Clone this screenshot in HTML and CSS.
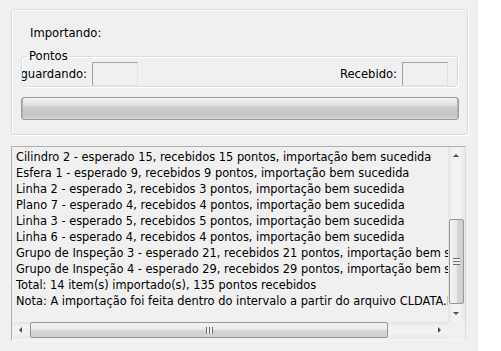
FILE: index.html
```
<!DOCTYPE html>
<html lang="pt">
<head>
  <meta charset="UTF-8">
  <title>Importando</title>
  <link rel="stylesheet" href="styles.css">
</head>
<body>
  <div class="dialog">
    <div class="group-box">
      <div class="status-label">Importando:</div>

      <fieldset class="points-box">
        <legend>Pontos</legend>
        <div class="points-row">
          <div class="field">
            <div class="field-label clip">Aguardando:</div>
            <div class="field-input"></div>
          </div>
          <div class="field">
            <div class="field-label">Recebido:</div>
            <div class="field-input"></div>
          </div>
        </div>
      </fieldset>

      <div class="progress-bar"></div>
    </div>

    <div class="log-box">
      <div class="log-view">
        <div class="log-lines" id="logLines"></div>
        <div class="v-scroll">
          <div class="arrow up"></div>
          <div class="v-track">
            <div class="v-thumb"><span class="grip-v"></span></div>
          </div>
          <div class="arrow down"></div>
        </div>
      </div>
      <div class="h-row">
        <div class="h-scroll">
          <div class="arrow left"></div>
          <div class="h-track">
            <div class="h-thumb"><span class="grip-h"></span></div>
          </div>
          <div class="arrow right"></div>
        </div>
        <div class="corner"></div>
      </div>
    </div>
  </div>

  <script>
const lines = [
  "Cilindro 2 - esperado 15, recebidos 15 pontos, importação bem sucedida",
  "Esfera 1 - esperado 9, recebidos 9 pontos, importação bem sucedida",
  "Linha 2 - esperado 3, recebidos 3 pontos, importação bem sucedida",
  "Plano 7 - esperado 4, recebidos 4 pontos, importação bem sucedida",
  "Linha 3 - esperado 5, recebidos 5 pontos, importação bem sucedida",
  "Linha 6 - esperado 4, recebidos 4 pontos, importação bem sucedida",
  "Grupo de Inspeção 3 - esperado 21, recebidos 21 pontos, importação bem sucedida",
  "Grupo de Inspeção 4 - esperado 29, recebidos 29 pontos, importação bem sucedida",
  "Total: 14 item(s) importado(s), 135 pontos recebidos",
  "Nota: A importação foi feita dentro do intervalo a partir do arquivo CLDATA.DAT"
];

const logLines = document.getElementById("logLines");
lines.forEach(text => {
  const row = document.createElement("div");
  row.className = "log-line";
  row.textContent = text;
  logLines.appendChild(row);
});
  </script>
</body>
</html>
```

FILE: styles.css
```
body {
  margin: 0;
  background: #ffffff;
  font-family: "DejaVu Sans", Verdana, sans-serif;
  font-size: 11.6px;
  color: #000;
}

.dialog {
  width: 478px;
  height: 351px;
  background: #f0f0f0;
  padding: 9px 0 0 11px;
  box-sizing: border-box;
}

/* top group box */
.group-box {
  width: 457px;
  height: 126px;
  box-sizing: border-box;
  border: 1px solid #d5dfe5;
  border-radius: 3px;
  box-shadow: inset 1px 1px 0 #fff, 1px 1px 0 #fff;
  padding: 16px 9px 0 9px;
}

.status-label {
  padding-left: 9px;
  height: 14px;
  line-height: 14px;
}

.points-box {
  margin: 10px 0 0 0;
  padding: 0;
  width: 437px;
  height: 37px;
  box-sizing: border-box;
  border: 1px solid #d5dfe5;
  border-radius: 3px;
  box-shadow: inset 1px 1px 0 #fff, 1px 1px 0 #fff;
}

.points-box legend {
  margin-left: 5px;
  padding: 0 2px;
  line-height: 13px;
}

.points-row {
  display: flex;
  justify-content: space-between;
  padding-right: 9px;
  margin-top: -1px;
}

.field {
  display: flex;
  align-items: center;
  gap: 5px;
}

.field-label {
  white-space: nowrap;
}

.field-label.clip {
  width: 65px;
  overflow: hidden;
  display: flex;
  justify-content: flex-end;
}

.field-input {
  width: 46px;
  height: 24px;
  box-sizing: border-box;
  border: 1px solid #a0a0a0;
  border-right-color: #e3e3e3;
  border-bottom-color: #e3e3e3;
  background: #f0f0f0;
}

.progress-bar {
  margin-top: 10px;
  height: 23px;
  width: 438px;
  box-sizing: border-box;
  border: 1px solid #9c9c9c;
  border-radius: 3px;
  background: linear-gradient(#f2f2f2 0%, #e4e4e4 30%, #cbcbcb 45%, #c6c6c6 85%, #d6d6d6 100%);
  box-shadow: inset 1px 0 0 #b4b4b4, inset -1px 0 0 #b4b4b4;
}

/* log list */
.log-box {
  margin-top: 11px;
  width: 455px;
  height: 195px;
  box-sizing: border-box;
  border: 1px solid #b0b0b0;
  border-right-color: #dcdcdc;
  border-bottom-color: #f8f8f8;
  padding-bottom: 2px;
  display: flex;
  flex-direction: column;
}

.log-view {
  display: flex;
  height: 175px;
}

.log-lines {
  flex: 1;
  overflow: hidden;
  padding: 2px 0 0 4px;
}

.log-line {
  height: 16px;
  line-height: 16px;
  white-space: nowrap;
  font-size: 11.4px;
}

.v-scroll {
  width: 17px;
  display: flex;
  flex-direction: column;
  background: linear-gradient(90deg, #e4e4e4, #f2f2f2 30%, #f2f2f2 70%, #e8e8e8);
}

.v-track {
  flex: 1;
  position: relative;
}

.v-thumb {
  position: absolute;
  top: 55px;
  left: 1px;
  width: 15px;
  height: 85px;
  box-sizing: border-box;
  border: 1px solid #979797;
  border-radius: 2px;
  background: linear-gradient(90deg, #f4f4f4, #e9e9e9 50%, #d6d6d6 51%, #cfcfcf);
  display: flex;
  align-items: center;
  justify-content: center;
}

.grip-v {
  width: 7px;
  height: 7px;
  background: repeating-linear-gradient(#6b6b6b 0 1px, #f0f0f0 1px 3px);
}

.h-row {
  display: flex;
  height: 16px;
}

.h-scroll {
  flex: 1;
  display: flex;
  background: linear-gradient(#e4e4e4, #f2f2f2 30%, #f2f2f2 70%, #e8e8e8);
}

.h-track {
  flex: 1;
  position: relative;
}

.h-thumb {
  position: absolute;
  left: 1px;
  top: 0;
  width: 358px;
  height: 16px;
  box-sizing: border-box;
  border: 1px solid #979797;
  border-radius: 2px;
  background: linear-gradient(#f4f4f4, #e9e9e9 50%, #d6d6d6 51%, #cfcfcf);
  display: flex;
  align-items: center;
  justify-content: center;
}

.grip-h {
  width: 7px;
  height: 7px;
  background: repeating-linear-gradient(90deg, #6b6b6b 0 1px, #f0f0f0 1px 3px);
}

.corner {
  width: 17px;
  background: #f0f0f0;
}

.arrow {
  width: 17px;
  height: 17px;
  position: relative;
  flex-shrink: 0;
}

.h-scroll .arrow {
  height: 16px;
}

.arrow::after {
  content: "";
  position: absolute;
  width: 0;
  height: 0;
}

.arrow.up::after {
  left: 5px;
  top: 7px;
  border-left: 3px solid transparent;
  border-right: 3px solid transparent;
  border-bottom: 3px solid #4d4d4d;
}

.arrow.down::after {
  left: 5px;
  top: 7px;
  border-left: 3px solid transparent;
  border-right: 3px solid transparent;
  border-top: 3px solid #4d4d4d;
}

.arrow.left::after {
  left: 7px;
  top: 5px;
  border-top: 3px solid transparent;
  border-bottom: 3px solid transparent;
  border-right: 3px solid #4d4d4d;
}

.arrow.right::after {
  left: 7px;
  top: 5px;
  border-top: 3px solid transparent;
  border-bottom: 3px solid transparent;
  border-left: 3px solid #4d4d4d;
}
```
